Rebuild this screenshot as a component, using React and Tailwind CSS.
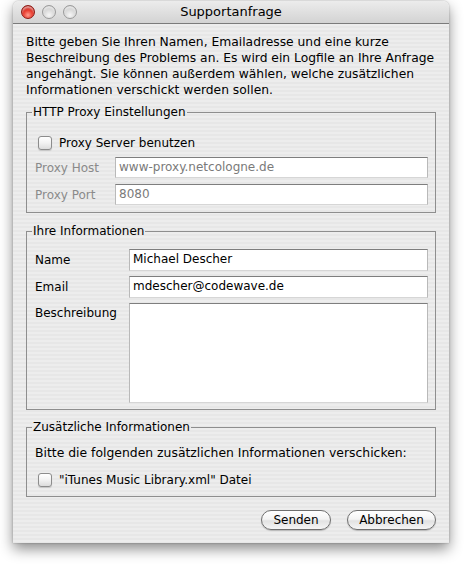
import React from 'react';

const stripes =
  'bg-[repeating-linear-gradient(180deg,#ededed_0px,#ededed_2px,#e7e7e7_2px,#e7e7e7_4px)]';

const Checkbox = () => (
  <span className="inline-block w-[14px] h-[14px] rounded-[3px] border border-[#8c8c8c] bg-[linear-gradient(180deg,#ffffff,#f2f2f2_50%,#dcdcdc)] shadow-[0_1px_1px_rgba(0,0,0,0.15)] shrink-0" />
);

const Field = ({ value, muted, className = 'h-[21px]' }) => (
  <div
    className={`flex-1 ${className} bg-white border border-t-[#7e7e7e] border-x-[#b9b9b9] border-b-[#d6d6d6] px-[3px] leading-[19px] ${
      muted ? 'text-[#7a7a7a]' : 'text-black'
    }`}
  >
    {value}
  </div>
);

const Group = ({ title, children, className = '' }) => (
  <fieldset className={`border border-[#8e8e8e] ${className}`}>
    <legend className="ml-[5px] px-[1px] leading-[16px]">{title}</legend>
    {children}
  </fieldset>
);

const Light = ({ red }) => (
  <span
    className={`inline-block w-[14px] h-[14px] rounded-full border ${
      red
        ? 'border-[#8c1a14] bg-[radial-gradient(circle_at_50%_75%,#ff9d8e_0%,#e8392c_45%,#b5140c_80%)]'
        : 'border-[#9a9a9a] bg-[radial-gradient(circle_at_50%_75%,#f6f6f6_0%,#d8d8d8_50%,#b9b9b9_90%)]'
    } shadow-[inset_0_2px_2px_rgba(255,255,255,0.6)]`}
  />
);

const Button = ({ children, width }) => (
  <button
    className={`${width} h-[20px] rounded-full border border-[#6f6f6f] bg-[linear-gradient(180deg,#ffffff,#f4f4f4_45%,#e2e2e2_55%,#f5f5f5)] leading-[18px] text-black shadow-[0_1px_1px_rgba(0,0,0,0.2)]`}
  >
    {children}
  </button>
);

export default function App() {
  return (
    <div className="min-h-[567px] bg-white pt-[1px] pl-[13px] font-['DejaVu_Sans',sans-serif] text-[12px] text-black">
      <div className="w-[436px] rounded-t-[6px] shadow-[0_6px_14px_rgba(0,0,0,0.45),0_0_2px_rgba(0,0,0,0.3)]">
        {/* title bar */}
        <div className="relative h-[23px] rounded-t-[6px] border-b border-[#7b7b7b] bg-[linear-gradient(180deg,#ececec,#d3d3d3)] flex items-center justify-center">
          <div className="absolute left-[8px] top-[4px] flex gap-[7px]">
            <Light red />
            <Light />
            <Light />
          </div>
          <span className="text-[13px] leading-[16px]">Supportanfrage</span>
        </div>

        <div className={`${stripes} px-[13px] pt-[10px] pb-[13px]`}>
          <p className="leading-[16px] whitespace-nowrap text-[12.3px]">
            Bitte geben Sie Ihren Namen, Emailadresse und eine kurze
            <br />
            Beschreibung des Problems an. Es wird ein Logfile an Ihre Anfrage
            <br />
            angehängt. Sie können außerdem wählen, welche zusätzlichen
            <br />
            Informationen verschickt werden sollen.
          </p>

          <Group title="HTTP Proxy Einstellungen" className="mt-[6px]">
            <div className="pt-[15px] pb-[7px] pl-[8px] pr-[7px]">
              <label className="flex items-center h-[16px] pl-[3px] gap-[7px]">
                <Checkbox />
                <span>Proxy Server benutzen</span>
              </label>
              <div className="flex items-center mt-[6px]">
                <span className="w-[80px] text-[#8a8a8a]">Proxy Host</span>
                <Field value="www-proxy.netcologne.de" muted />
              </div>
              <div className="flex items-center mt-[6px]">
                <span className="w-[80px] text-[#8a8a8a]">Proxy Port</span>
                <Field value="8080" muted />
              </div>
            </div>
          </Group>

          <Group title="Ihre Informationen" className="mt-[10px]">
            <div className="pt-[10px] pb-[6px] pl-[8px] pr-[7px]">
              <div className="flex items-center">
                <span className="w-[94px]">Name</span>
                <Field value="Michael Descher" className="h-[22px]" />
              </div>
              <div className="flex items-center mt-[5px]">
                <span className="w-[94px]">Email</span>
                <Field value="mdescher@codewave.de" className="h-[22px]" />
              </div>
              <div className="flex items-start mt-[5px]">
                <span className="w-[94px] pt-[1px]">Beschreibung</span>
                <Field value="" className="h-[100px]" />
              </div>
            </div>
          </Group>

          <Group title="Zusätzliche Informationen" className="mt-[9px]">
            <div className="pt-[10px] pb-[8px] pl-[8px] pr-[7px]">
              <p className="leading-[16px] text-[12.4px]">
                Bitte die folgenden zusätzlichen Informationen verschicken:
              </p>
              <label className="flex items-center h-[16px] mt-[11px] pl-[3px] gap-[7px]">
                <Checkbox />
                <span>"iTunes Music Library.xml" Datei</span>
              </label>
            </div>
          </Group>

          <div className="flex justify-end gap-[16px] mt-[13px]">
            <Button width="w-[70px]">Senden</Button>
            <Button width="w-[89px]">Abbrechen</Button>
          </div>
        </div>
      </div>
    </div>
  );
}
